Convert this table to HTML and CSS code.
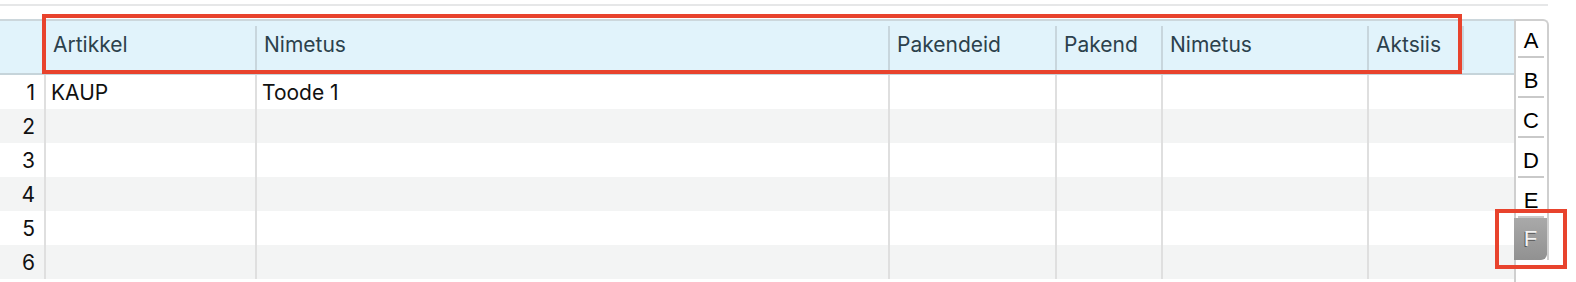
FILE: index.html
```html
<!DOCTYPE html>
<html>
<head>
<meta charset="utf-8">
<link rel="stylesheet" href="styles.css">
</head>
<body>
<div class="page">
  <div class="topline"></div>
  <div class="main">
    <div class="grid">
      <div class="hrow">
        <div class="hc hc-num"></div>
        <div class="hc">Artikkel</div>
        <div class="hc">Nimetus</div>
        <div class="hc">Pakendeid</div>
        <div class="hc">Pakend</div>
        <div class="hc">Nimetus</div>
        <div class="hc">Aktsiis</div>
        <div class="hc hc-last"></div>
      </div>
      <div class="row">
        <div class="c num">1</div><div class="c">KAUP</div><div class="c">Toode 1</div><div class="c"></div><div class="c"></div><div class="c"></div><div class="c last"></div>
      </div>
      <div class="row alt">
        <div class="c num">2</div><div class="c"></div><div class="c"></div><div class="c"></div><div class="c"></div><div class="c"></div><div class="c last"></div>
      </div>
      <div class="row">
        <div class="c num">3</div><div class="c"></div><div class="c"></div><div class="c"></div><div class="c"></div><div class="c"></div><div class="c last"></div>
      </div>
      <div class="row alt">
        <div class="c num">4</div><div class="c"></div><div class="c"></div><div class="c"></div><div class="c"></div><div class="c"></div><div class="c last"></div>
      </div>
      <div class="row">
        <div class="c num">5</div><div class="c"></div><div class="c"></div><div class="c"></div><div class="c"></div><div class="c"></div><div class="c last"></div>
      </div>
      <div class="row alt">
        <div class="c num">6</div><div class="c"></div><div class="c"></div><div class="c"></div><div class="c"></div><div class="c"></div><div class="c last"></div>
      </div>
    </div>
    <div class="tabs">
      <div class="tablist">
        <div class="tab">A</div>
        <div class="tab">B</div>
        <div class="tab">C</div>
        <div class="tab">D</div>
        <div class="tab">E</div>
        <div class="tab tab-active">F</div>
      </div>
    </div>
  </div>
  <div class="mark mark-header"></div>
  <div class="mark mark-tab"></div>
</div>
</body>
</html>
```
FILE: styles.css
```css
html, body {
  margin: 0;
  padding: 0;
  background: #ffffff;
}
body {
  font-family: Inter, "Liberation Sans", Arial, sans-serif;
  width: 1576px;
  height: 282px;
  overflow: hidden;
}
.page {
  position: relative;
  display: flex;
  flex-direction: column;
  height: 282px;
}
.topline {
  margin-top: 4px;
  width: 1548px;
  height: 2px;
  background: #e6e7e8;
}
.main {
  margin-top: 13px;
  display: flex;
  flex: 1;
  min-height: 0;
}
.grid {
  width: 1514px;
  display: flex;
  flex-direction: column;
}
.hrow, .row {
  display: grid;
  grid-template-columns: 46px 211px 633px 167px 106px 206px 95px 1fr;
}
.row {
  grid-template-columns: 46px 211px 633px 167px 106px 206px 1fr;
  height: 34px;
  background: #ffffff;
}
.row.alt {
  background: #f3f4f4;
}
.hrow {
  background: #e1f3fb;
  border-top: 2px solid #ccd7dc;
  border-bottom: 2px solid #c6d4da;
  padding: 5px 0 3px;
  align-items: center;
}
.hc {
  box-sizing: border-box;
  height: 44px;
  border-right: 2px solid #c8d6dd;
  padding-left: 7px;
  font-size: 21px;
  color: #2c414c;
  display: flex;
  align-items: center;
  padding-bottom: 8px;
}
.hc-num {
  border-right: none;
}
.hc-last {
  border-right: none;
}
.c {
  box-sizing: border-box;
  border-right: 2px solid #dfdfdf;
  font-size: 21px;
  color: #111111;
  padding-left: 5px;
  display: flex;
  align-items: center;
}
.c.num {
  justify-content: flex-end;
  padding-left: 0;
  padding-right: 9px;
}
.c.last {
  border-right: none;
}
.tabs {
  box-sizing: border-box;
  width: 35px;
  border-left: 2px solid #cfcfcf;
  display: flex;
  flex-direction: column;
}
.tablist {
  box-sizing: border-box;
  border-top: 2px solid #cfcfcf;
  border-right: 2px solid #cfcfcf;
  border-top-right-radius: 6px;
  display: flex;
  flex-direction: column;
  padding: 0 3px 0 2px;
}
.tab {
  height: 38px;
  border-bottom: 2px solid #c9c9c9;
  display: flex;
  align-items: flex-end;
  justify-content: center;
  font-size: 22px;
  font-family: "Liberation Sans", Arial, sans-serif;
  color: #000000;
  line-height: 30px;
}
.tab:first-child {
  height: 35px;
}
.tab-active {
  margin: 0 -3px 0 -4px;
  height: 42px;
  border: none;
  background: linear-gradient(#a9a9a9, #919191);
  border-bottom-right-radius: 6px;
  color: #f4f4f4;
  text-shadow: -1px 1px 0 #555555;
  align-items: center;
  line-height: 24px;
}
.mark {
  position: absolute;
  box-sizing: border-box;
  border: 4px solid #e8432d;
}
.mark-header {
  left: 42px;
  top: 14px;
  width: 1420px;
  height: 60px;
}
.mark-tab {
  left: 1495px;
  top: 209px;
  width: 72px;
  height: 60px;
}
```
